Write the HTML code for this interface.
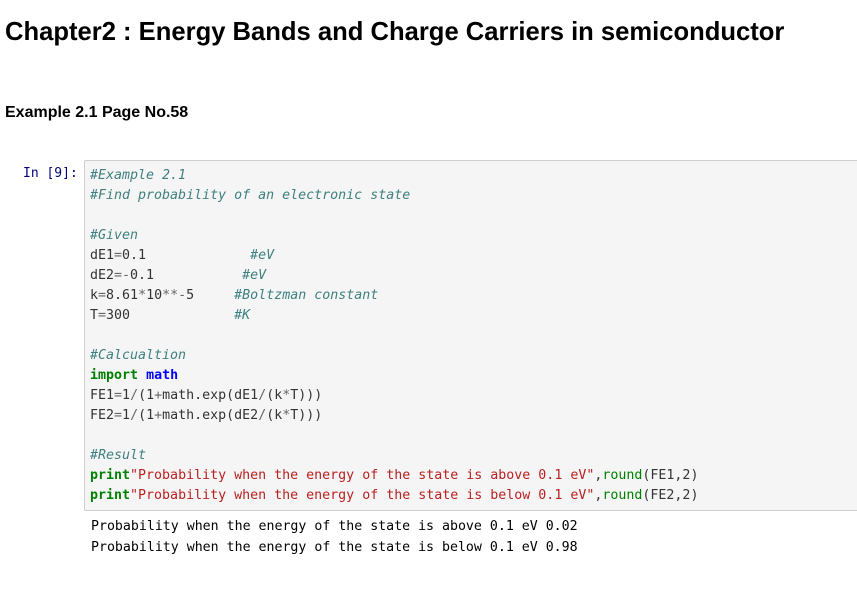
<!DOCTYPE html>
<html><head><style>
body{margin:0;background:#fff;width:857px;height:592px;overflow:hidden;font-family:"Liberation Sans",sans-serif;}
h1{position:absolute;left:5px;top:18px;margin:0;font-size:25.6px;font-weight:bold;color:#000;}
h4{position:absolute;left:5px;top:104px;margin:0;font-size:16px;font-weight:bold;color:#000;}
.prompt{position:absolute;left:23px;top:166px;font-family:"DejaVu Sans Mono",monospace;font-size:13px;color:#000080;}
.cell{position:absolute;left:84px;top:160px;width:790px;height:351px;background:#f5f5f5;border:1px solid #cfcfcf;border-radius:2px;box-sizing:border-box;}
pre{margin:0;font-family:"DejaVu Sans Mono",monospace;line-height:20px;}
.code{position:absolute;left:90px;top:166px;color:#333;font-size:13.3px;}
.out{position:absolute;left:91px;top:516px;line-height:21px;color:#000;font-size:13.25px;}
.c{color:#408080;font-style:italic}
.k{color:#008000;font-weight:bold}
.n{color:#0000ff;font-weight:bold}
.s{color:#ba2121}
.b{color:#008000}
.o{color:#666}
</style></head><body>
<h1>Chapter2 : Energy Bands and Charge Carriers in semiconductor</h1>
<h4>Example 2.1 Page No.58</h4>
<div class="prompt">In [9]:</div>
<div class="cell"></div>
<pre class="code"><span class="c">#Example 2.1</span>
<span class="c">#Find probability of an electronic state</span>

<span class="c">#Given</span>
dE1<span class="o">=</span>0.1             <span class="c">#eV</span>
dE2<span class="o">=-</span>0.1           <span class="c">#eV</span>
k<span class="o">=</span>8.61<span class="o">*</span>10<span class="o">**-</span>5     <span class="c">#Boltzman constant</span>
T<span class="o">=</span>300             <span class="c">#K</span>

<span class="c">#Calcualtion</span>
<span class="k">import</span> <span class="n">math</span>
FE1<span class="o">=</span>1<span class="o">/</span>(1<span class="o">+</span>math.exp(dE1<span class="o">/</span>(k<span class="o">*</span>T)))
FE2<span class="o">=</span>1<span class="o">/</span>(1<span class="o">+</span>math.exp(dE2<span class="o">/</span>(k<span class="o">*</span>T)))

<span class="c">#Result</span>
<span class="k">print</span><span class="s">"Probability when the energy of the state is above 0.1 eV"</span>,<span class="b">round</span>(FE1,2)
<span class="k">print</span><span class="s">"Probability when the energy of the state is below 0.1 eV"</span>,<span class="b">round</span>(FE2,2)</pre>
<pre class="out">Probability when the energy of the state is above 0.1 eV 0.02
Probability when the energy of the state is below 0.1 eV 0.98</pre>
</body></html>
